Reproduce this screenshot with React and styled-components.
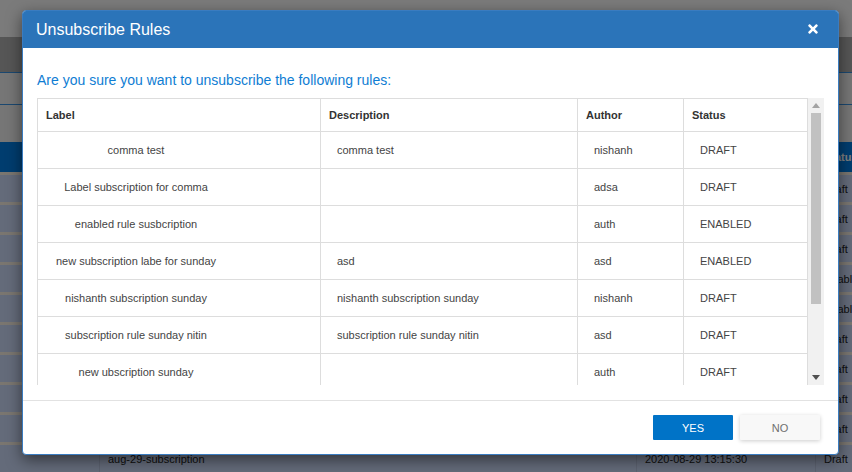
import React from 'react'
import styled, { createGlobalStyle } from 'styled-components'
import { FaTimes } from 'react-icons/fa'

const GlobalStyle = createGlobalStyle`
  html, body {
    margin: 0;
    padding: 0;
    font-family: "Liberation Sans", Arial, sans-serif;
  }
  #root {
    height: 472px;
    overflow: hidden;
    position: relative;
  }
`

const rules = [
  { label: 'comma test', description: 'comma test', author: 'nishanh', status: 'DRAFT' },
  { label: 'Label subscription for comma', description: '', author: 'adsa', status: 'DRAFT' },
  { label: 'enabled rule susbcription', description: '', author: 'auth', status: 'ENABLED' },
  { label: 'new subscription labe for sunday', description: 'asd', author: 'asd', status: 'ENABLED' },
  { label: 'nishanth subscription sunday', description: 'nishanth subscription sunday', author: 'nishanh', status: 'DRAFT' },
  { label: 'subscription rule sunday nitin', description: 'subscription rule sunday nitin', author: 'asd', status: 'DRAFT' },
  { label: 'new ubscription sunday', description: '', author: 'auth', status: 'DRAFT' },
  { label: 'aug-29-subscription', description: '', author: 'auth', status: 'DRAFT' },
]

// rows of the list behind the dialog; only the last one shows below it
const pageRows = [
  { id: 1, status: 'Draft' },
  { id: 2, status: 'Draft' },
  { id: 3, status: 'Draft' },
  { id: 4, status: 'Enabled' },
  { id: 5, status: 'Enabled' },
  { id: 6, status: 'Draft' },
  { id: 7, status: 'Draft' },
  { id: 8, status: 'Draft' },
  { id: 9, status: 'Draft' },
  { id: 10, name: 'aug-29-subscription', date: '2020-08-29 13:15:30', status: 'Draft' },
]

/* ---------- page behind the dialog ---------- */

const Page = styled.div`
  display: flex;
  flex-direction: column;
  height: 472px;
  background: #f0f0f0;
`

const TopBar = styled.div`
  height: 38px;
  background: #f6f6f6;
`

const Toolbar = styled.div`
  height: 35px;
  background: #acacac;
  border-bottom: 1px solid #3690e0;
`

const FilterBar = styled.div`
  height: ${(p) => p.h}px;
  background: #ececec;
  border-bottom: ${(p) => (p.line ? '1px solid #3690e0' : 'none')};
`

const GridRow = styled.div`
  display: grid;
  grid-template-columns: 99px 537px 179px 1fr;
  height: ${(p) => (p.head ? 30 : 27)}px;
  flex-shrink: 0;
  align-items: center;
  background: ${(p) => (p.head ? '#007ade' : '#c8d6f4')};
  border-top: ${(p) => (p.head ? 'none' : '3px solid #f4ece0')};
  color: ${(p) => (p.head ? '#fff' : '#222')};
  font-size: 11px;
  white-space: nowrap;
  overflow: hidden;
`

const GridCell = styled.div`
  height: 100%;
  display: flex;
  align-items: center;
  padding-left: 8px;
  border-left: ${(p) => (p.first ? 'none' : '1px solid rgba(0, 0, 0, 0.08)')};
  font-weight: ${(p) => (p.head ? 'bold' : 'normal')};
`

const Overlay = styled.div`
  position: absolute;
  inset: 0;
  background: rgba(0, 0, 0, 0.5);
`

/* ---------- dialog ---------- */

const Modal = styled.div`
  position: absolute;
  left: 22px;
  top: 10px;
  width: 817px;
  height: 445px;
  box-sizing: border-box;
  display: flex;
  flex-direction: column;
  background: #fff;
  border: 1px solid #3a7cc0;
  border-radius: 4px;
  overflow: hidden;
  box-shadow: 0 5px 15px rgba(0, 0, 0, 0.5);
`

const ModalHeader = styled.div`
  height: 38px;
  flex-shrink: 0;
  display: flex;
  align-items: center;
  justify-content: space-between;
  padding: 0 19px 0 14px;
  margin: -1px -1px 0 -1px;
  background: #2b74b9;
  color: #fff;
`

const Title = styled.h4`
  margin: 0;
  font-size: 16px;
  font-weight: normal;
  padding-top: 1px;
`

const CloseButton = styled.span`
  display: flex;
  align-items: center;
  font-size: 14px;
  cursor: pointer;
`

const ModalBody = styled.div`
  padding: 24px 14px 15px 14px;
  border-bottom: 1px solid #e2e2e2;
`

const Question = styled.p`
  margin: 0 0 10px 0;
  font-size: 14px;
  line-height: 16px;
  color: #0f7dd3;
`

const TableFrame = styled.div`
  display: flex;
  height: 287px;
`

const TableArea = styled.div`
  width: 771px;
  overflow: hidden;
  border-top: 1px solid #dddddd;
  border-left: 1px solid #dddddd;
  box-sizing: border-box;
`

const Row = styled.div`
  display: grid;
  grid-template-columns: 283px 257px 106px 124px;
  height: ${(p) => (p.head ? 33 : 37)}px;
  box-sizing: border-box;
  border-bottom: 1px solid #dddddd;
  font-size: 11px;
`

const Cell = styled.div`
  display: flex;
  align-items: center;
  padding-left: ${(p) => p.pad}px;
  border-right: 1px solid #dddddd;
  color: ${(p) => (p.head ? '#333' : '#444')};
  font-weight: ${(p) => (p.head ? 'bold' : 'normal')};
  white-space: nowrap;
  overflow: hidden;
`

const LabelText = styled.span`
  width: 180px;
  text-align: center;
`

const Scrollbar = styled.div`
  width: 16px;
  display: flex;
  flex-direction: column;
  align-items: center;
  background: #f1f1f1;
`

const Arrow = styled.div`
  height: 15px;
  display: flex;
  align-items: center;
  justify-content: center;
  flex-shrink: 0;
`

const Thumb = styled.div`
  width: 10px;
  height: 191px;
  background: #c1c1c1;
`

const Spacer = styled.div`
  flex: 1;
`

const ModalFooter = styled.div`
  display: flex;
  justify-content: flex-end;
  gap: 7px;
  padding: 14px 18px 0 0;
`

const Button = styled.button`
  width: 80px;
  height: 25px;
  border: none;
  border-radius: 1px;
  font-family: "Liberation Sans", Arial, sans-serif;
  font-size: 11px;
  cursor: pointer;
  background: ${(p) => (p.primary ? '#0073c7' : '#f8f8f8')};
  color: ${(p) => (p.primary ? '#fff' : '#6f6f6f')};
  box-shadow: ${(p) => (p.primary ? 'none' : '0 1px 4px rgba(0, 0, 0, 0.2)')};
`

function Triangle({ up, color }) {
  return (
    <svg width="8" height="5" viewBox="0 0 8 5">
      <polygon points={up ? '0,5 8,5 4,0' : '0,0 8,0 4,5'} fill={color} />
    </svg>
  )
}

export default function App() {
  return (
    <>
      <GlobalStyle />
      <Page>
        <TopBar />
        <Toolbar />
        <FilterBar h={31} line />
        <FilterBar h={38} />
        <GridRow head>
          <GridCell first head />
          <GridCell head />
          <GridCell head />
          <GridCell head>Status</GridCell>
        </GridRow>
        {pageRows.map((r) => (
          <GridRow key={r.id}>
            <GridCell first />
            <GridCell>{r.name}</GridCell>
            <GridCell>{r.date}</GridCell>
            <GridCell>{r.status}</GridCell>
          </GridRow>
        ))}
      </Page>
      <Overlay />
      <Modal>
        <ModalHeader>
          <Title>Unsubscribe Rules</Title>
          <CloseButton>
            <FaTimes />
          </CloseButton>
        </ModalHeader>
        <ModalBody>
          <Question>Are you sure you want to unsubscribe the following rules:</Question>
          <TableFrame>
            <TableArea>
              <Row head>
                <Cell head pad={8}>Label</Cell>
                <Cell head pad={8}>Description</Cell>
                <Cell head pad={8}>Author</Cell>
                <Cell head pad={8}>Status</Cell>
              </Row>
              {rules.map((r) => (
                <Row key={r.label}>
                  <Cell pad={8}>
                    <LabelText>{r.label}</LabelText>
                  </Cell>
                  <Cell pad={16}>{r.description}</Cell>
                  <Cell pad={16}>{r.author}</Cell>
                  <Cell pad={16}>{r.status}</Cell>
                </Row>
              ))}
            </TableArea>
            <Scrollbar>
              <Arrow>
                <Triangle up color="#a3a3a3" />
              </Arrow>
              <Thumb />
              <Spacer />
              <Arrow>
                <Triangle color="#505050" />
              </Arrow>
            </Scrollbar>
          </TableFrame>
        </ModalBody>
        <ModalFooter>
          <Button primary>YES</Button>
          <Button>NO</Button>
        </ModalFooter>
      </Modal>
    </>
  )
}
